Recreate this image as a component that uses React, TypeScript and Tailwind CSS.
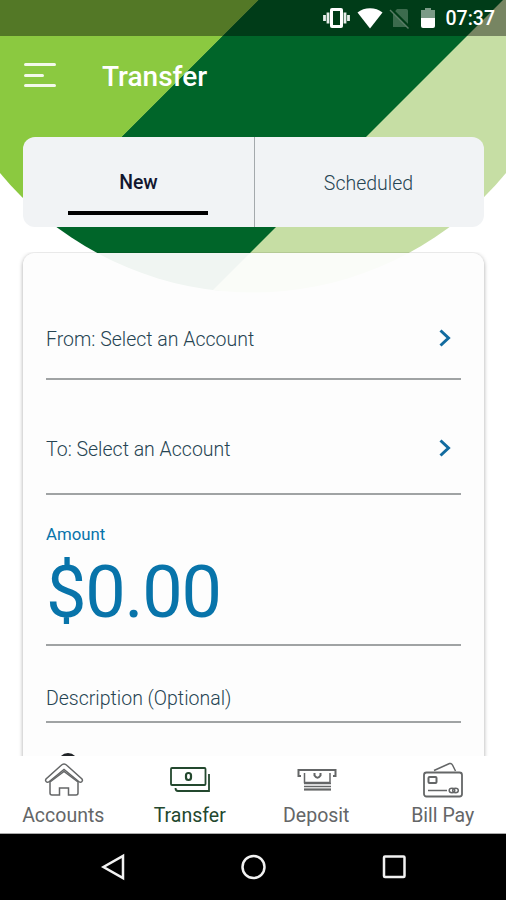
import type { ReactNode } from 'react';

type TabItem = {
  label: string;
  icon: ReactNode;
  active?: boolean;
};

function Backdrop() {
  return (
    <svg className="absolute left-0 top-0" width="506" height="300" viewBox="0 0 506 300">
      <defs>
        <clipPath id="disc">
          <circle cx="253" cy="-35" r="327.5" />
        </clipPath>
      </defs>
      <g clipPath="url(#disc)">
        <path d="M258 0H504L214 300H-42Z" fill="#006529" />
        <path d="M0 0H258.5L-41.5 300H0Z" fill="#8bc940" />
        <path d="M503 0H506V300H203Z" fill="#c6dea4" />
      </g>
    </svg>
  );
}

function StatusBar() {
  return (
    <div className="relative flex h-9 items-center justify-end bg-black/40 pr-[11px] text-white">
      <svg width="114" height="24" viewBox="0 0 114 24" fill="none">
        {/* vibrate */}
        <rect x="7" y="2" width="13" height="20" rx="2" fill="#fff" />
        <rect x="10" y="5" width="7" height="14" fill="#003c17" />
        <path d="M5 6.500V17.500M1.500 9V15M22 6.500V17.500M25.500 9V15" stroke="#e8eeea" strokeWidth="2.800" />
        {/* wifi */}
        <path d="M34.500 6.500C41 .8 53 .8 59.500 6.500L47 22.500Z" fill="#fff" />
        {/* no sim */}
        <path d="M70 7.500L74 3H83.500Q85 3 85 4.500V21H70Z" fill="#3c6b4d" />
        <path d="M68 3L87 22" stroke="#003c17" strokeWidth="3" />
        <path d="M67 4L85.500 22.500" stroke="#5b7d67" strokeWidth="1.500" />
        {/* battery */}
        <path d="M98 4H102V2H108V4H112V12H98Z" fill="#7b9b87" />
        <path d="M98 12H112V20Q112 22 110 22H100Q98 22 98 20Z" fill="#fff" />
      </svg>
      <span className="ml-[9px] mt-0.5 text-[19.500px] font-medium leading-none">07:37</span>
    </div>
  );
}

function AccountRow({ label, className }: { label: string; className: string }) {
  return (
    <button className={`flex w-full items-end justify-between border-b-2 border-[#a0a3a4] text-left ${className}`}>
      <span className="text-[19.500px] font-light leading-6 text-[#264452]">{label}</span>
      <svg className="mr-2.5 mb-[5px]" width="12" height="18" viewBox="0 0 12 18" fill="none">
        <path d="M1.500 1.500L9.500 9L1.500 16.500" stroke="#126b9f" strokeWidth="3" />
      </svg>
    </button>
  );
}

const tabs: TabItem[] = [
  {
    label: 'Accounts',
    icon: (
      <>
        <path d="M20 3Q21.500 3 23 4.500L38 18Q39 19.500 38 20.500Q36.500 22 35 20.700L20 8.500L5 20.700Q3.500 22 2 20.500Q1 19.500 2 18L17 4.500Q18.500 3 20 3Z" />
        <path d="M6 21V32Q6 34 8 34H15.500V27H24.500V34H32Q34 34 34 32V21L20 10.500Z" />
      </>
    ),
  },
  {
    label: 'Transfer',
    active: true,
    icon: (
      <>
        <rect x="1" y="7" width="34.500" height="17" rx="1" strokeWidth="1.800" />
        <rect x="16" y="12" width="5" height="7" rx="2.400" strokeWidth="2.200" />
        <path d="M39 13V30H8Q5.500 30 5.500 27" strokeWidth="1.800" />
      </>
    ),
  },
  {
    label: 'Deposit',
    icon: (
      <>
        <path d="M4 15H1.500V9H38.500V15H36" strokeWidth="2" />
        <path d="M7.500 12V21.500H33V12" />
        <path d="M17.500 12V14.500Q20.500 19 23.500 14.500V12" strokeWidth="2" />
        <path d="M7 22.500H34M7 25.500H34" />
        <path d="M7 28.500H34" strokeWidth="2.200" />
      </>
    ),
  },
  {
    label: 'Bill Pay',
    icon: (
      <>
        <path d="M11 9.500L26.500 2.500Q28.500 2 29.500 4L32.500 10" />
        <rect x="1" y="11.500" width="38" height="24" rx="2.500" strokeWidth="1.800" />
        <rect x="5.500" y="16" width="8" height="6" rx="1" strokeWidth="2" />
        <path d="M5 29.500H24" />
        <ellipse cx="29" cy="29.500" rx="2.800" ry="2.200" />
        <ellipse cx="32.500" cy="29.500" rx="2.800" ry="2.200" />
      </>
    ),
  },
];

function BottomTab({ label, icon, active }: TabItem) {
  return (
    <button className={`flex flex-1 flex-col items-center pt-[5px] ${active ? 'text-[#23482e]' : 'text-[#646667]'}`}>
      <svg className="ml-px" width="40" height="38" viewBox="0 0 40 38" fill="none" stroke="currentColor" strokeWidth="1.500">
        {icon}
      </svg>
      <span className="mt-[5px] text-[19.500px] leading-6">{label}</span>
    </button>
  );
}

export default function App() {
  return (
    <div className="relative flex h-[900px] w-[506px] flex-col overflow-hidden bg-white font-['Roboto',sans-serif]">
      <Backdrop />
      <StatusBar />

      <header className="relative flex h-[101px] items-start pl-6 pt-[27px]">
        <button className="flex h-6 w-8 flex-col justify-between">
          <span className="h-[3px] w-8 rounded-sm bg-[#f3f9e9]" />
          <span className="h-[3px] w-5 rounded-sm bg-[#f3f9e9]" />
          <span className="h-[3px] w-8 rounded-sm bg-[#f3f9e9]" />
        </button>
        <h1 className="ml-[46px] text-[28px] font-medium leading-7 text-white">Transfer</h1>
      </header>

      <div className="relative ml-[23px] mr-[22px] flex h-[90px] shrink-0 rounded-xl bg-[#f1f3f5]">
        <button className="flex w-[232px] flex-col items-center border-r border-[#a4a9ac] pt-[34px]">
          <span className="text-[19.400px] font-medium leading-6 text-[#11172f]">New</span>
          <span className="mt-4 mr-px h-1 w-[140px] bg-black" />
        </button>
        <button className="flex flex-1 items-start justify-center pr-0.5 pt-[35px]">
          <span className="text-[19.500px] font-light leading-6 text-[#264452]">Scheduled</span>
        </button>
      </div>

      <main className="relative mt-[25px] min-h-0 flex-1 overflow-hidden pl-[23px] pr-[22px] pt-px">
        <div className="h-[560px] rounded-xl bg-[#fdfdfd]/95 px-[23px] shadow-[0_1px_4px_rgba(0,0,0,0.35)]">
          <AccountRow label="From: Select an Account" className="h-[127px] pb-[26px]" />
          <AccountRow label="To: Select an Account" className="h-[115px] pb-[31px]" />
          <div className="h-[151px] border-b-2 border-[#a0a3a4] pt-[29px] text-[#0874aa]">
            <div className="text-[16.800px] leading-5">Amount</div>
            <div className="mt-[13px] text-[72px] leading-[72px] tracking-[-1.200px]">$0.00</div>
          </div>
          <div className="h-[77px] border-b-2 border-[#a0a3a4] pt-[41px] text-[19.500px] font-light leading-6 text-[#264452]">
            Description (Optional)
          </div>
          <div className="ml-3 mt-[30px] h-5 w-5 rounded-full border-[3px] border-[#202326]" />
        </div>
      </main>

      <nav className="relative flex h-[78px] shrink-0 border-b border-[#aaa] bg-white">
        {tabs.map((tab) => (
          <BottomTab key={tab.label} {...tab} />
        ))}
      </nav>

      <div className="relative flex h-[66px] shrink-0 items-center bg-black">
        <svg width="506" height="66" viewBox="0 0 506 66" fill="none" stroke="#f2f2f2" strokeWidth="2.500">
          <path d="M123 22V44L103.500 33Z" />
          <circle cx="253.500" cy="33" r="11" />
          <rect x="384" y="22.500" width="20.500" height="20.500" rx="1" />
        </svg>
      </div>
    </div>
  );
}
